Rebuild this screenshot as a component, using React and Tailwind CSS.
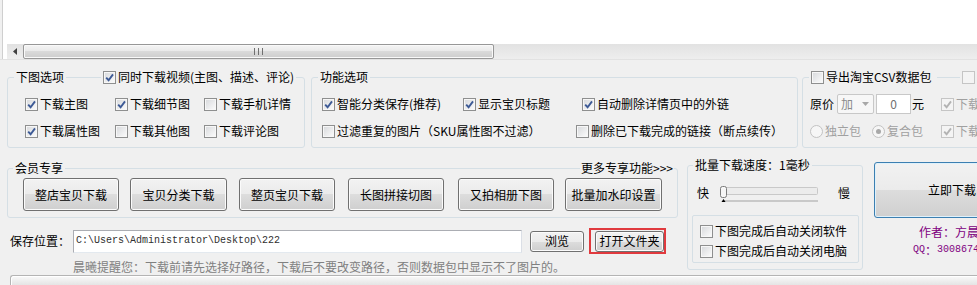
import React from "react";

function Check({ checked, disabled }) {
  return (
    <span
      className={`flex h-[13px] w-[13px] shrink-0 items-center justify-center border ${
        disabled
          ? "border-[#c5c5c5] bg-[#f4f4f4]"
          : "border-[#8e8f8f] bg-[linear-gradient(135deg,#d6d8db,#fdfdfd)] shadow-[inset_0_0_0_1px_#f7f7f7]"
      }`}
    >
      {checked && (
        <svg width="9" height="9" viewBox="0 0 9 9">
          <path
            d="M1.2 4.6 L3.6 7.2 L8 1.4"
            fill="none"
            stroke={disabled ? "#b3b3b3" : "#3d5a96"}
            strokeWidth="1.9"
          />
        </svg>
      )}
    </span>
  );
}

function CheckItem({ label, checked, disabled, className = "" }) {
  return (
    <div className={`flex h-[18px] shrink-0 items-center gap-[2px] ${className}`}>
      <Check checked={checked} disabled={disabled} />
      <span className={`whitespace-nowrap ${disabled ? "text-[#a0a0a0]" : ""}`}>{label}</span>
    </div>
  );
}

function Radio({ checked, label, className = "" }) {
  return (
    <div className={`flex h-[18px] shrink-0 items-center gap-[2px] ${className}`}>
      <span className="flex h-[13px] w-[13px] items-center justify-center rounded-full border border-[#c2c2c2] bg-[#f6f6f6]">
        {checked && <span className="h-[5px] w-[5px] rounded-full bg-[#a8a8a8]" />}
      </span>
      <span className="whitespace-nowrap text-[#a0a0a0]">{label}</span>
    </div>
  );
}

const btn =
  "flex shrink-0 items-center justify-center rounded-[3px] border border-[#707070] bg-[linear-gradient(#f2f2f2_0%,#ebebeb_50%,#dddddd_50%,#cfcfcf_100%)] shadow-[inset_0_0_0_1px_#fbfbfb] whitespace-nowrap text-black";

const memberBtns = [
  ["整店宝贝下载", "ml-[15px] w-[96px]"],
  ["宝贝分类下载", "ml-[11px] w-[97px]"],
  ["整页宝贝下载", "ml-[12px] w-[96px]"],
  ["长图拼接切图", "ml-[13px] w-[96px]"],
  ["又拍相册下图", "ml-[14px] w-[96px]"],
  ["批量加水印设置", "ml-[11px] w-[97px]"],
];

export default function App() {
  return (
    <div className="relative h-[285px] w-[977px] overflow-hidden bg-[#f0f0f0] font-['Noto_Sans_CJK_SC',sans-serif] text-[12px] leading-[14px] text-black">
      {/* top white panel with horizontal scrollbar */}
      <div className="ml-[2px] h-[44px] border-l border-[#cfcfcf] bg-white" />
      <div className="flex h-[15px]">
        <div className="ml-[2px] w-[5px] border-l border-[#cfcfcf] bg-white" />
        <div className="flex flex-1 items-stretch bg-[linear-gradient(#e2e2e2,#eeeeee)]">
          <div className="flex w-[16px] items-center justify-center">
            <svg width="4" height="7" viewBox="0 0 4 7">
              <path d="M4 0 L0 3.5 L4 7 Z" fill="#404040" />
            </svg>
          </div>
          <div className="flex w-[471px] items-center justify-center rounded-[2px] border border-[#979797] bg-[linear-gradient(#f4f4f4_0%,#e9e9e9_50%,#dadada_50%,#cdcdcd_100%)] shadow-[inset_0_0_0_1px_#f9f9f9]">
            <svg width="9" height="7" viewBox="0 0 9 7">
              <rect x="0" y="0" width="1" height="7" fill="#707070" />
              <rect x="4" y="0" width="1" height="7" fill="#707070" />
              <rect x="8" y="0" width="1" height="7" fill="#707070" />
            </svg>
          </div>
          <div className="flex-1" />
        </div>
      </div>
      <div className="h-[1px] bg-[#e2e2e2]" />

      {/* options row */}
      <div className="flex">
        {/* 下图选项 */}
        <div className="ml-[7px] mt-[17px] h-[71px] w-[298px] shrink-0 rounded-[3px] border border-[#d5dfe5]">
          <div className="-mt-[8px] flex h-[14px] items-center">
            <span className="ml-[6px] bg-[#f0f0f0] px-[2px]">下图选项</span>
            <span className="ml-[35px] bg-[#f0f0f0] px-[2px]">
              <CheckItem label="同时下载视频(主图、描述、评论)" checked className="h-[14px]" />
            </span>
          </div>
          <div className="mt-[11px] flex pl-[17px]">
            <CheckItem label="下载主图" checked className="w-[90px]" />
            <CheckItem label="下载细节图" checked className="w-[89px]" />
            <CheckItem label="下载手机详情" />
          </div>
          <div className="mt-[9px] flex pl-[17px]">
            <CheckItem label="下载属性图" checked className="w-[90px]" />
            <CheckItem label="下载其他图" className="w-[89px]" />
            <CheckItem label="下载评论图" />
          </div>
        </div>

        {/* 功能选项 */}
        <div className="ml-[6px] mt-[17px] h-[71px] w-[487px] shrink-0 rounded-[3px] border border-[#d5dfe5]">
          <div className="-mt-[8px] flex h-[14px] items-center">
            <span className="ml-[6px] bg-[#f0f0f0] px-[2px]">功能选项</span>
          </div>
          <div className="mt-[11px] flex pl-[10px]">
            <CheckItem label="智能分类保存(推荐)" checked className="w-[141px]" />
            <CheckItem label="显示宝贝标题" checked className="w-[119px]" />
            <CheckItem label="自动删除详情页中的外链" checked />
          </div>
          <div className="mt-[9px] flex pl-[10px]">
            <CheckItem label="过滤重复的图片（SKU属性图不过滤）" className="w-[254px]" />
            <CheckItem label="删除已下载完成的链接（断点续传）" />
          </div>
        </div>

        {/* 导出淘宝CSV数据包 */}
        <div className="ml-[4px] mt-[17px] h-[71px] w-[220px] shrink-0 rounded-[3px] border border-[#d5dfe5]">
          <div className="-mt-[8px] flex h-[14px] items-center">
            <span className="ml-[6px] w-[128px] bg-[#f0f0f0] px-[2px]">
              <CheckItem label="导出淘宝CSV数据包" className="h-[14px]" />
            </span>
            <span className="ml-[23px] bg-[#f0f0f0] px-[2px]">
              <Check disabled />
            </span>
          </div>
          <div className="mt-[10px] flex h-[20px] items-center pl-[7px]">
            <span className="whitespace-nowrap">原价</span>
            <div className="ml-[3px] flex h-[20px] w-[37px] shrink-0 items-center justify-between rounded-[2px] border border-[#c8c8c8] bg-[#f7f7f7] pl-[3px] pr-[4px] text-[#8a8a8a]">
              <span>加</span>
              <svg width="7" height="4" viewBox="0 0 7 4">
                <path d="M0 0 L7 0 L3.5 4 Z" fill="#a8a8a8" />
              </svg>
            </div>
            <div className="ml-[2px] flex h-[20px] w-[35px] shrink-0 items-center justify-center border border-[#c8c8c8] bg-white text-[#707070]">
              0
            </div>
            <span className="ml-[1px] whitespace-nowrap">元</span>
            <CheckItem label="下载" checked disabled className="ml-[17px]" />
          </div>
          <div className="mt-[8px] flex pl-[7px]">
            <Radio label="独立包" className="w-[62px]" />
            <Radio label="复合包" checked className="w-[69px]" />
            <CheckItem label="下载" checked disabled />
          </div>
        </div>
      </div>

      {/* lower section */}
      <div className="flex h-[127px]">
        {/* left column */}
        <div className="w-[678px] shrink-0 pl-[7px]">
          <div className="mt-[20px] h-[50px] w-[671px] rounded-[3px] border border-[#d5dfe5]">
            <div className="-mt-[8px] flex h-[14px] items-center">
              <span className="ml-[5px] bg-[#f0f0f0] px-[2px]">会员专享</span>
              <span className="ml-auto mr-[3px] bg-[#f0f0f0] px-[1px]">更多专享功能&gt;&gt;&gt;</span>
            </div>
            <div className="mt-[3px] flex h-[33px]">
              {memberBtns.map(([t, c]) => (
                <div key={t} className={`${btn} ${c}`}>
                  {t}
                </div>
              ))}
            </div>
          </div>

          <div className="mt-[10px] flex h-[26px] items-center">
            <span className="ml-[3px] w-[63px] shrink-0 whitespace-nowrap">保存位置：</span>
            <div className="flex h-[23px] w-[449px] shrink-0 items-center border border-[#abadb3] border-b-[#e3e9ef] border-r-[#dbdfe6] bg-white pl-[2px] font-['Liberation_Mono',monospace] text-[10px] text-[#303030]">
              C:\Users\Administrator\Desktop\222
            </div>
            <div className={`${btn} ml-[8px] h-[21px] w-[54px]`}>浏览</div>
            <div className="ml-[5px] flex h-[26px] w-[77px] shrink-0 items-center border-2 border-[#e03a3e] pl-[4px]">
              <div className={`${btn} h-[21px] w-[69px]`}>打开文件夹</div>
            </div>
          </div>

          <div className="ml-[66px] mt-[6px] whitespace-nowrap text-[#808080]">
            晨曦提醒您：下载前请先选择好路径，下载后不要改变路径，否则数据包中显示不了图片的。
          </div>
        </div>

        {/* speed group */}
        <div className="ml-[9px] mt-[17px] h-[105px] w-[176px] shrink-0 rounded-[3px] border border-[#d5dfe5]">
          <div className="-mt-[8px] flex h-[14px] items-center">
            <span className="ml-[5px] whitespace-nowrap bg-[#f0f0f0] px-[2px]">批量下载速度：1毫秒</span>
          </div>
          <div className="mt-[11px] flex h-[20px] items-center">
            <span className="ml-[9px]">快</span>
            <svg className="ml-[10px] shrink-0" width="100" height="20" viewBox="0 0 100 20">
              <rect x="1.5" y="4.5" width="97" height="7" rx="1" fill="#ececec" stroke="#c9c9c9" />
              <rect x="1.5" y="3.5" width="6" height="11" rx="2" fill="#f6f6f6" stroke="#7c7c7c" />
              <rect x="4" y="17" width="95" height="2" fill="#c9c9c9" />
              <path d="M2.5 19 L4.5 16 L6.5 19 Z" fill="#000" />
            </svg>
            <span className="ml-[19px]">慢</span>
          </div>
          <div className="ml-[4px] mt-[12px] h-[48px] w-[167px] rounded-[2px] border border-[#d5dfe5] pl-[7px] pt-[6px]">
            <CheckItem label="下图完成后自动关闭软件" />
            <CheckItem label="下图完成后自动关闭电脑" className="mt-[2px]" />
          </div>
        </div>

        {/* right column */}
        <div className="ml-[11px] shrink-0">
          <div className="mt-[14px] flex h-[56px] w-[156px] items-center justify-center rounded-[3px] border border-[#3c7fb1] bg-[linear-gradient(#f2f2f2_0%,#ebebeb_50%,#dddddd_50%,#cfcfcf_100%)] shadow-[inset_0_0_0_1px_#dff1fb]">
            立即下载
          </div>
          <div className="ml-[45px] mt-[7px] whitespace-nowrap text-[#800080]">作者：方晨曦</div>
          <div className="ml-[39px] mt-[4px] flex items-center whitespace-nowrap text-[#800080]">
            <span className="font-['Liberation_Mono',monospace] text-[10px]">QQ</span>
            <span>：</span>
            <span className="font-['Liberation_Mono',monospace] text-[10px]">3008674</span>
          </div>
        </div>
      </div>

      {/* bottom bar */}
      <div className="ml-[10px] h-[10px] rounded-tl-[3px] border-l border-t border-[#b4b4b4] bg-[linear-gradient(#fafafa,#e4e4e4)] shadow-[inset_1px_1px_0_#ffffff]" />
    </div>
  );
}
